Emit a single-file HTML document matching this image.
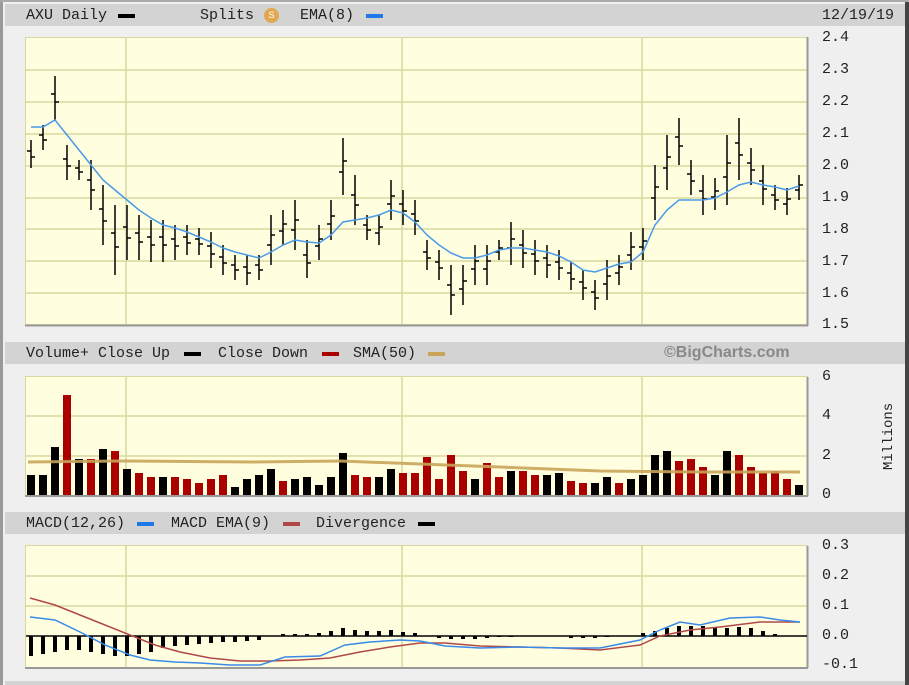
<!DOCTYPE html>
<html><head><meta charset="utf-8"><style>
body{margin:0;background:#fff;}
#c{position:relative;width:909px;height:685px;background:#efefef;overflow:hidden;font-family:"Liberation Mono",monospace;}
.bar{position:absolute;left:5px;width:900px;height:22px;background:#d3d3d3;}
.t{position:absolute;font-size:15px;color:#222;white-space:nowrap;line-height:16px;}
.ax{position:absolute;font-size:15px;color:#222;left:822px;line-height:16px;}
.dash{position:absolute;height:4px;width:17px;}
</style></head><body><div id="c">
<div style="position:absolute;left:0;top:0;width:3px;height:685px;background:#999"></div>
<div style="position:absolute;left:905px;top:0;width:4px;height:685px;background:#444"></div>
<div style="position:absolute;left:0;top:0;width:909px;height:2px;background:#aaa"></div>
<div class="bar" style="top:4px"></div>
<div class="bar" style="top:342px"></div>
<div class="bar" style="top:512px"></div>
<div class="bar" style="top:681px;height:4px"></div>

<div class="t" style="left:26px;top:8px">AXU Daily</div>
<div class="dash" style="left:118px;top:14px;background:#000"></div>
<div class="t" style="left:200px;top:8px">Splits</div>
<div style="position:absolute;left:264px;top:8px;width:15px;height:15px;border-radius:50%;background:#e0a850;color:#fff;font-size:9px;text-align:center;line-height:15px;font-family:'Liberation Sans',sans-serif">S</div>
<div class="t" style="left:300px;top:8px">EMA(8)</div>
<div class="dash" style="left:366px;top:14px;background:#1e78e8"></div>
<div class="t" style="left:822px;top:8px">12/19/19</div>

<div class="t" style="left:26px;top:346px">Volume+ Close Up</div>
<div class="dash" style="left:184px;top:352px;background:#000"></div>
<div class="t" style="left:218px;top:346px">Close Down</div>
<div class="dash" style="left:322px;top:352px;background:#a00"></div>
<div class="t" style="left:353px;top:346px">SMA(50)</div>
<div class="dash" style="left:428px;top:352px;background:#c9a45a"></div>
<div class="t" style="left:664px;top:345px;font-family:'Liberation Sans',sans-serif;font-weight:bold;color:#888;font-size:16px">©BigCharts.com</div>

<div class="t" style="left:26px;top:516px">MACD(12,26)</div>
<div class="dash" style="left:137px;top:522px;background:#1e78e8"></div>
<div class="t" style="left:171px;top:516px">MACD EMA(9)</div>
<div class="dash" style="left:283px;top:522px;background:#b04848"></div>
<div class="t" style="left:316px;top:516px">Divergence</div>
<div class="dash" style="left:418px;top:522px;background:#000"></div>

<div class="ax" style="top:30px">2.4</div><div class="ax" style="top:62px">2.3</div><div class="ax" style="top:94px">2.2</div><div class="ax" style="top:126px">2.1</div><div class="ax" style="top:158px">2.0</div><div class="ax" style="top:190px">1.9</div><div class="ax" style="top:222px">1.8</div><div class="ax" style="top:254px">1.7</div><div class="ax" style="top:286px">1.6</div><div class="ax" style="top:317px">1.5</div>
<div class="ax" style="top:369px">6</div><div class="ax" style="top:408px">4</div><div class="ax" style="top:448px">2</div><div class="ax" style="top:487px">0</div>
<div class="t" style="left:881px;top:470px;transform:rotate(-90deg);transform-origin:left top;font-size:14px">Millions</div>
<div class="ax" style="top:538px">0.3</div><div class="ax" style="top:568px">0.2</div><div class="ax" style="top:598px">0.1</div><div class="ax" style="top:628px">0.0</div><div class="ax" style="top:657px">-0.1</div>

<svg width="909" height="685" style="position:absolute;left:0;top:0">
<g fill="#ffffe0" stroke="#d9d7a0">
<rect x="25.5" y="37.5" width="782" height="287"/>
<rect x="25.5" y="376.5" width="782" height="119"/>
<rect x="25.5" y="545.5" width="782" height="122"/>
</g>
<g stroke="#d9d7a0" stroke-width="1.5">
<path d="M126 38V324M402 38V324M642 38V324M126 377V495M402 377V495M642 377V495M126 546V667M402 546V667M642 546V667"/>
<path d="M26 70H807M26 102H807M26 134H807M26 166H807M26 198H807M26 229H807M26 261H807M26 293H807"/>
<path d="M26 416H807M26 456H807M26 576H807M26 606H807"/>
</g>
<path d="M25 325.5H808M25 496H808M25 668H808M807.5 37V326M807.5 377V496M807.5 546V668" stroke="#999" stroke-width="2"/>
<g stroke="#000" stroke-width="1.5" fill="none">
<path d="M31 140V168M27 151h4M31 157h4M43 125V150M39 135h4M43 140h4M55 76V120M51 94h4M55 102h4M67 145V180M63 159h4M67 166h4M79 160V180M75 168h4M79 172h4M91 160V210M87 180h4M91 190h4M103 185V245M99 209h4M103 221h4M115 205V275M111 233h4M115 247h4M127 205V260M123 227h4M127 238h4M139 215V260M135 233h4M139 242h4M151 220V262M147 237h4M151 245h4M163 220V262M159 237h4M163 245h4M175 225V260M171 239h4M175 246h4M187 225V255M183 237h4M187 243h4M199 228V255M195 239h4M199 244h4M211 232V268M207 246h4M211 254h4M223 245V275M219 257h4M223 263h4M235 255V280M231 265h4M235 270h4M247 255V285M243 267h4M247 273h4M259 255V280M255 265h4M259 270h4M271 215V265M267 245h4M271 235h4M283 210V245M279 231h4M283 224h4M295 200V250M291 230h4M295 220h4M307 240V278M303 255h4M307 263h4M319 225V260M315 246h4M319 239h4M331 200V240M327 224h4M331 216h4M343 138V195M339 172h4M343 161h4M355 175V225M351 195h4M355 205h4M367 215V240M363 225h4M367 230h4M379 215V245M375 233h4M379 227h4M391 180V220M387 204h4M391 196h4M403 190V225M399 204h4M403 211h4M415 200V235M411 214h4M415 221h4M427 240V270M423 252h4M427 258h4M439 250V280M435 262h4M439 268h4M451 265V315M447 285h4M451 295h4M463 265V305M459 289h4M463 281h4M475 245V285M471 269h4M475 261h4M487 245V285M483 269h4M487 261h4M499 240V260M495 252h4M499 248h4M511 222V265M507 248h4M511 239h4M523 230V268M519 245h4M523 253h4M535 240V275M531 254h4M535 261h4M547 245V278M543 258h4M547 265h4M559 250V280M555 262h4M559 268h4M571 262V290M567 273h4M571 279h4M583 270V300M579 282h4M583 288h4M595 280V310M591 292h4M595 298h4M607 260V300M603 284h4M607 276h4M619 255V285M615 273h4M619 267h4M631 232V270M627 255h4M631 247h4M643 228V260M639 247h4M643 241h4M655 165V220M651 198h4M655 187h4M667 135V190M663 168h4M667 157h4M679 118V165M675 137h4M679 146h4M691 160V195M687 174h4M691 181h4M703 175V215M699 191h4M703 199h4M715 178V210M711 197h4M715 191h4M727 135V205M723 177h4M727 163h4M739 118V180M735 143h4M739 155h4M751 148V185M747 163h4M751 170h4M763 165V205M759 181h4M763 189h4M775 185V210M771 195h4M775 200h4M787 188V215M783 204h4M787 199h4M799 175V200M795 190h4M799 185h4"/>
</g>
<polyline fill="none" stroke="#4a9ae8" stroke-width="1.5" points="31,127 43,127 55,120 67,135 79,150 91,165 103,180 115,190 127,200 139,210 151,218 163,225 175,228 187,232 199,237 211,242 223,248 235,252 247,255 259,258 271,252 283,245 295,240 307,242 319,243 331,235 343,222 355,220 367,218 379,215 391,210 403,213 415,222 427,235 439,245 451,253 463,258 475,258 487,255 499,250 511,248 523,248 535,250 547,252 559,256 571,262 583,270 595,272 607,268 619,264 631,262 643,252 655,225 667,210 679,200 691,200 703,200 715,198 727,192 739,185 751,182 763,185 775,187 787,190 799,186"/>
<g id="vol">
<rect x="27" y="475" width="8" height="20" fill="#000"/><rect x="39" y="475" width="8" height="20" fill="#000"/><rect x="51" y="447" width="8" height="48" fill="#000"/><rect x="63" y="395" width="8" height="100" fill="#a00"/><rect x="75" y="459" width="8" height="36" fill="#000"/><rect x="87" y="459" width="8" height="36" fill="#a00"/><rect x="99" y="449" width="8" height="46" fill="#000"/><rect x="111" y="451" width="8" height="44" fill="#a00"/><rect x="123" y="469" width="8" height="26" fill="#000"/><rect x="135" y="473" width="8" height="22" fill="#a00"/><rect x="147" y="477" width="8" height="18" fill="#a00"/><rect x="159" y="477" width="8" height="18" fill="#000"/><rect x="171" y="477" width="8" height="18" fill="#a00"/><rect x="183" y="479" width="8" height="16" fill="#a00"/><rect x="195" y="483" width="8" height="12" fill="#a00"/><rect x="207" y="479" width="8" height="16" fill="#a00"/><rect x="219" y="475" width="8" height="20" fill="#a00"/><rect x="231" y="487" width="8" height="8" fill="#000"/><rect x="243" y="479" width="8" height="16" fill="#000"/><rect x="255" y="475" width="8" height="20" fill="#000"/><rect x="267" y="469" width="8" height="26" fill="#000"/><rect x="279" y="481" width="8" height="14" fill="#a00"/><rect x="291" y="479" width="8" height="16" fill="#000"/><rect x="303" y="477" width="8" height="18" fill="#000"/><rect x="315" y="485" width="8" height="10" fill="#000"/><rect x="327" y="477" width="8" height="18" fill="#000"/><rect x="339" y="453" width="8" height="42" fill="#000"/><rect x="351" y="475" width="8" height="20" fill="#a00"/><rect x="363" y="477" width="8" height="18" fill="#a00"/><rect x="375" y="477" width="8" height="18" fill="#000"/><rect x="387" y="469" width="8" height="26" fill="#000"/><rect x="399" y="473" width="8" height="22" fill="#a00"/><rect x="411" y="473" width="8" height="22" fill="#a00"/><rect x="423" y="457" width="8" height="38" fill="#a00"/><rect x="435" y="479" width="8" height="16" fill="#a00"/><rect x="447" y="455" width="8" height="40" fill="#a00"/><rect x="459" y="471" width="8" height="24" fill="#a00"/><rect x="471" y="479" width="8" height="16" fill="#000"/><rect x="483" y="463" width="8" height="32" fill="#a00"/><rect x="495" y="477" width="8" height="18" fill="#a00"/><rect x="507" y="471" width="8" height="24" fill="#000"/><rect x="519" y="471" width="8" height="24" fill="#a00"/><rect x="531" y="475" width="8" height="20" fill="#a00"/><rect x="543" y="475" width="8" height="20" fill="#000"/><rect x="555" y="473" width="8" height="22" fill="#000"/><rect x="567" y="481" width="8" height="14" fill="#a00"/><rect x="579" y="483" width="8" height="12" fill="#a00"/><rect x="591" y="483" width="8" height="12" fill="#000"/><rect x="603" y="477" width="8" height="18" fill="#000"/><rect x="615" y="483" width="8" height="12" fill="#a00"/><rect x="627" y="479" width="8" height="16" fill="#000"/><rect x="639" y="475" width="8" height="20" fill="#000"/><rect x="651" y="455" width="8" height="40" fill="#000"/><rect x="663" y="451" width="8" height="44" fill="#000"/><rect x="675" y="461" width="8" height="34" fill="#a00"/><rect x="687" y="459" width="8" height="36" fill="#a00"/><rect x="699" y="467" width="8" height="28" fill="#a00"/><rect x="711" y="475" width="8" height="20" fill="#000"/><rect x="723" y="451" width="8" height="44" fill="#000"/><rect x="735" y="455" width="8" height="40" fill="#a00"/><rect x="747" y="467" width="8" height="28" fill="#a00"/><rect x="759" y="473" width="8" height="22" fill="#a00"/><rect x="771" y="471" width="8" height="24" fill="#a00"/><rect x="783" y="479" width="8" height="16" fill="#a00"/><rect x="795" y="485" width="8" height="10" fill="#000"/>
</g>
<polyline fill="none" stroke="#c9a45a" stroke-width="3" opacity="0.9" points="28,462 120,461 250,462 340,461 420,464 500,467 600,471 700,472 800,472"/>
<path d="M26 636H807" stroke="#000" stroke-width="1.5"/>
<g stroke="#000" stroke-width="4">
<path d="M31 636v20M43 636v18M55 636v16M67 636v14M79 636v14M91 636v16M103 636v18M115 636v20M127 636v20M139 636v18M151 636v16M163 636v12M175 636v10M187 636v9M199 636v8M211 636v7M223 636v6M235 636v6M247 636v5M259 636v4M283 636v-2M295 636v-2M307 636v-2M319 636v-3M331 636v-5M343 636v-8M355 636v-6M367 636v-5M379 636v-5M391 636v-6M403 636v-4M415 636v-3M439 636v2M451 636v3M463 636v3M475 636v3M487 636v2M499 636v1M511 636v1M571 636v2M583 636v2M595 636v2M607 636v1M643 636v-3M655 636v-5M667 636v-8M679 636v-10M691 636v-10M703 636v-10M715 636v-8M727 636v-8M739 636v-9M751 636v-8M763 636v-5M775 636v-2"/>
</g>
<polyline fill="none" stroke="#b04848" stroke-width="1.5" points="30,598 55,605 80,615 105,625 130,635 155,645 180,652 210,658 240,661 270,661 300,660 330,658 360,652 390,647 420,643 445,643 480,646 520,647 560,648 600,650 640,645 660,636 690,630 720,627 760,622 800,622"/>
<polyline fill="none" stroke="#3a8ae8" stroke-width="1.5" points="30,617 55,620 80,632 105,645 130,655 150,660 175,662 200,663 230,665 260,665 285,657 320,656 345,645 370,642 400,640 420,641 445,646 480,648 520,647 560,648 600,648 640,640 660,630 680,622 700,625 730,618 760,617 780,620 800,622"/>
</svg>
</div></body></html>
